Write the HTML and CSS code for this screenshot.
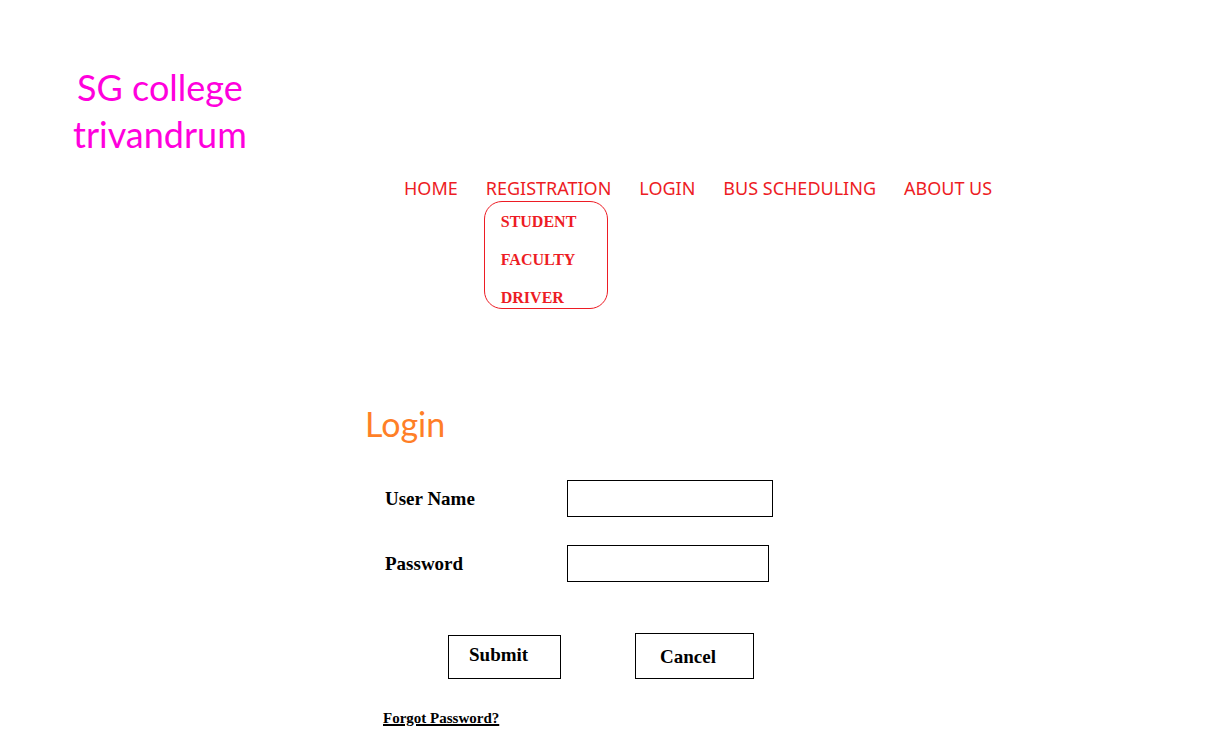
FILE: index.html
```html
<!DOCTYPE html>
<html lang="en">
<head>
<meta charset="utf-8">
<title>SG college trivandrum - Login</title>
<link rel="stylesheet" href="styles.css">
</head>
<body>
<header class="header">
  <div class="brand">SG college<br>trivandrum</div>
  <nav class="nav">
    <a href="#home">HOME</a>
    <div class="nav-item">
      <a href="#registration">REGISTRATION</a>
      <div class="menu">
        <a href="#student">STUDENT</a>
        <a href="#faculty">FACULTY</a>
        <a href="#driver">DRIVER</a>
      </div>
    </div>
    <a href="#login">LOGIN</a>
    <a href="#bus">BUS SCHEDULING</a>
    <a href="#about">ABOUT US</a>
  </nav>
</header>
<main class="main">
  <h1 class="title">Login</h1>
  <form class="form">
    <div class="field">
      <label for="user">User Name</label>
      <input class="input-user" id="user" type="text">
    </div>
    <div class="field">
      <label for="pass">Password</label>
      <input class="input-pass" id="pass" type="password">
    </div>
    <div class="actions">
      <button class="submit" type="submit">Submit</button>
      <button class="cancel" type="reset">Cancel</button>
    </div>
    <a class="forgot" href="#forgot">Forgot Password?</a>
  </form>
</main>
</body>
</html>
```
FILE: styles.css
```css
* { box-sizing: border-box; }
body {
  margin: 0;
  background: #fff;
  color: #000;
  font-family: "Liberation Serif", serif;
}
a { color: inherit; text-decoration: none; }
.header { padding: 64px 0 0 73px; }
.brand {
  width: max-content;
  color: #f0d;
  font-family: "Tempus Sans ITC", Lato, sans-serif;
  font-size: 36px;
  line-height: 47px;
  text-align: center;
}
.nav {
  display: flex;
  gap: 28px;
  padding: 18px 0 0 331px;
  color: #ed1c24;
  font-family: "Noto Sans", sans-serif;
  font-size: 18px;
  line-height: 24px;
  white-space: nowrap;
}
.nav-item { position: relative; }
.menu {
  position: absolute;
  top: 25px;
  left: -2px;
  display: flex;
  flex-direction: column;
  gap: 18px;
  width: 124px;
  padding: 10px 16px 0;
  border: 1px solid #ed1c24;
  border-radius: 18px;
  font: bold 16px/20px "Liberation Serif", serif;
}
.main { padding: 202px 24px 24px 365px; }
.title {
  margin: 0;
  color: #ff7f27;
  font: 400 34px/44px "Tempus Sans ITC", Lato, sans-serif;
}
.form {
  padding: 34px 0 0 18px;
  font-size: 19px;
  font-weight: bold;
}
.field {
  display: grid;
  grid-template-columns: 182px 1fr;
  align-items: center;
  margin-bottom: 28px;
  padding-left: 2px;
}
input, button {
  border: 1px solid #000;
  border-radius: 0;
  background: #fff;
  color: #000;
  font: inherit;
}
input { height: 37px; padding: 0 8px; }
.input-user { width: 206px; }
.input-pass { width: 202px; }
.actions {
  display: flex;
  align-items: flex-end;
  gap: 74px;
  padding: 23px 0 27px 65px;
}
button { padding: 0 20px 4px; text-align: left; }
.submit { width: 113px; height: 44px; }
.cancel { width: 119px; height: 46px; padding: 2px 24px 0; }
.forgot {
  font-size: 15px;
  line-height: 20px;
  text-decoration: underline;
  text-decoration-thickness: 2px;
}
```
